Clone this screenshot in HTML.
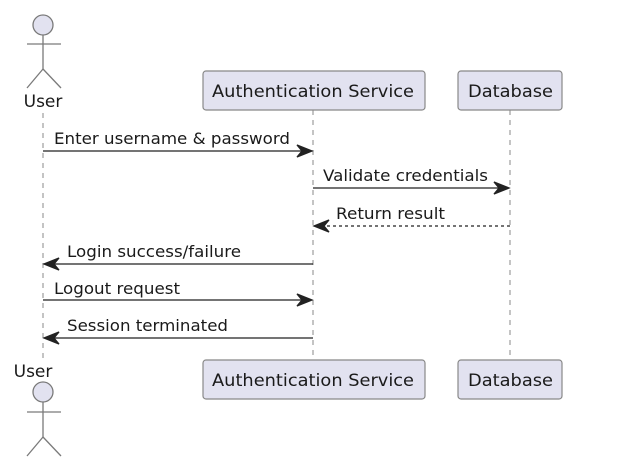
<!DOCTYPE html>
<html><head><meta charset="utf-8"><style>
html,body{margin:0;padding:0;background:#fff;}
svg{display:block}
text{font-family:"DejaVu Sans","Liberation Sans",sans-serif;fill:#1a1a1a}
</style></head><body>
<svg width="624" height="462" viewBox="0 0 624 462" xmlns="http://www.w3.org/2000/svg">
<rect width="624" height="462" fill="#fff"/>
<!-- lifelines -->
<g stroke="#888" stroke-width="1" stroke-dasharray="5,5">
<line x1="43" y1="113" x2="43" y2="360"/>
<line x1="313" y1="110" x2="313" y2="360"/>
<line x1="510" y1="110" x2="510" y2="360"/>
</g>
<!-- top actor -->
<g stroke="#7a7a7a" stroke-width="1.3" fill="none">
<circle cx="43" cy="25" r="10" fill="#e2e2f0"/>
<line x1="43" y1="35" x2="43" y2="69"/>
<line x1="27" y1="44" x2="61" y2="44"/>
<line x1="43" y1="69" x2="27" y2="88"/>
<line x1="43" y1="69" x2="61" y2="88"/>
</g>
<text x="43" y="107" font-size="17" text-anchor="middle">User</text>
<!-- boxes top -->
<g fill="#e2e2f0" stroke="#888" stroke-width="1.2">
<rect x="203" y="71" width="222" height="39" rx="3"/>
<rect x="458" y="71" width="104" height="39" rx="3"/>
<rect x="203" y="360" width="222" height="39" rx="3"/>
<rect x="458" y="360" width="104" height="39" rx="3"/>
</g>
<text x="212" y="97" font-size="17" textLength="202" lengthAdjust="spacingAndGlyphs">Authentication Service</text>
<text x="468" y="97" font-size="17" textLength="85" lengthAdjust="spacingAndGlyphs">Database</text>
<text x="212" y="386" font-size="17" textLength="202" lengthAdjust="spacingAndGlyphs">Authentication Service</text>
<text x="468" y="386" font-size="17" textLength="85" lengthAdjust="spacingAndGlyphs">Database</text>
<!-- bottom actor -->
<text x="33" y="377" font-size="17" text-anchor="middle">User</text>
<g stroke="#7a7a7a" stroke-width="1.3" fill="none">
<circle cx="43" cy="392" r="10" fill="#e2e2f0"/>
<line x1="43" y1="402" x2="43" y2="437"/>
<line x1="27" y1="412" x2="61" y2="412"/>
<line x1="43" y1="437" x2="27" y2="456"/>
<line x1="43" y1="437" x2="61" y2="456"/>
</g>
<!-- messages -->
<g stroke="#222" stroke-width="1.3" fill="#222">
<line x1="43" y1="151" x2="311" y2="151"/>
<path d="M312,151 L297,145 L302,151 L297,157 Z"/>
<line x1="313" y1="188" x2="508" y2="188"/>
<path d="M509,188 L494,182 L499,188 L494,194 Z"/>
<line x1="510" y1="226" x2="316" y2="226" stroke-dasharray="3,3"/>
<path d="M314,226 L329,220 L324,226 L329,232 Z" />
<line x1="313" y1="264" x2="46" y2="264"/>
<path d="M44,264 L59,258 L54,264 L59,270 Z"/>
<line x1="43" y1="300" x2="311" y2="300"/>
<path d="M312,300 L297,294 L302,300 L297,306 Z"/>
<line x1="313" y1="338" x2="46" y2="338"/>
<path d="M44,338 L59,332 L54,338 L59,344 Z"/>
</g>
<g font-size="16">
<text x="54" y="144" textLength="236" lengthAdjust="spacingAndGlyphs">Enter username &amp; password</text>
<text x="323" y="181" textLength="165" lengthAdjust="spacingAndGlyphs">Validate credentials</text>
<text x="336" y="219" textLength="109" lengthAdjust="spacingAndGlyphs">Return result</text>
<text x="67" y="257" textLength="174" lengthAdjust="spacingAndGlyphs">Login success/failure</text>
<text x="54" y="294" textLength="126" lengthAdjust="spacingAndGlyphs">Logout request</text>
<text x="67" y="331" textLength="161" lengthAdjust="spacingAndGlyphs">Session terminated</text>
</g>
</svg>
</body></html>
